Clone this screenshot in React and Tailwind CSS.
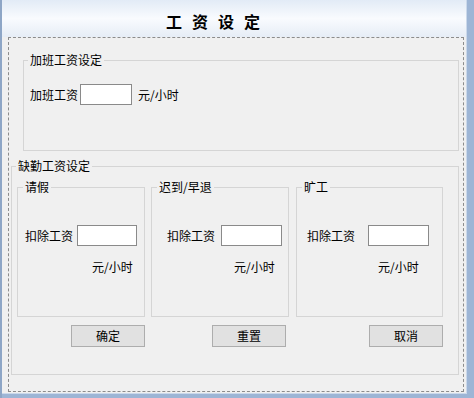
const subGroups = [
  { title: "请假", width: "w-[128px]", gap: "", labelPad: "pl-[7px]", inputGap: "ml-[4px] w-[60px]", unitPad: "pl-[74px]" },
  { title: "迟到/早退", width: "w-[138px]", gap: "ml-[6px]", labelPad: "pl-[15px]", inputGap: "ml-[6px] w-[61px]", unitPad: "pl-[82px]" },
  { title: "旷工", width: "w-[147px]", gap: "ml-[7px]", labelPad: "pl-[10px]", inputGap: "ml-[13px] w-[61px]", unitPad: "pl-[81px]" },
];

const TextBox = ({ className }) => (
  <input
    type="text"
    className={`h-[21px] bg-white border border-[#8a8a8a] outline-none px-1 text-[12px] ${className}`}
  />
);

const Button = ({ children, className }) => (
  <button className={`w-[74px] h-[22px] bg-[#e1e1e1] border border-[#adadad] text-[12px] leading-[20px] text-black ${className}`}>
    {children}
  </button>
);

export default function App() {
  return (
    <div className="w-[474px] h-[398px] bg-[#9db5d5] border-l-2 border-[#8ea6c6] pr-[7px] pb-[4px] font-['Noto_Sans_CJK_SC',sans-serif] text-[12px] text-black">
      <div className="w-full h-full bg-[#f0f0f0] border-r border-b border-[#cbd9eb] flex flex-col">
        {/* Title bar */}
        <div className="h-[37px] shrink-0 bg-linear-to-b from-[#e2ebf6] via-[#f9fbfe] to-[#e6edf6] pl-[164px] pt-[11px]">
          <span className="text-[16px] font-bold leading-[20px] tracking-[10px]">工资设定</span>
        </div>

        {/* Dashed panel */}
        <div className="ml-[6px] mr-[2px] h-[355px] border border-dashed border-[#8c8c8c] flex flex-col">
          <fieldset className="mt-[14px] ml-[14px] mr-[4px] min-w-0 border border-[#d5d5d5]">
            <legend className="ml-[4px] px-[2px] leading-4">加班工资设定</legend>
            <div className="flex items-center mt-[16px] mb-[45px] pl-[6px] h-[21px]">
              <span>加班工资</span>
              <TextBox className="ml-[2px] w-[52px]" />
              <span className="ml-[6px]">元/小时</span>
            </div>
          </fieldset>

          <fieldset className="mt-[7px] ml-[2px] mr-[4px] min-w-0 border border-[#d5d5d5]">
            <legend className="ml-[4px] px-[2px] leading-4">缺勤工资设定</legend>
            <div className="flex mt-[5px] pl-[5px]">
              {subGroups.map((g) => (
                <fieldset
                  key={g.title}
                  className={`${g.width} ${g.gap} h-[138px] shrink-0 min-w-0 border border-[#d5d5d5]`}
                >
                  <legend className="ml-[5px] px-[2px] leading-4">{g.title}</legend>
                  <div className={`flex items-center mt-[30px] h-[21px] ${g.labelPad}`}>
                    <span>扣除工资</span>
                    <TextBox className={g.inputGap} />
                  </div>
                  <div className={`mt-[13px] leading-4 ${g.unitPad}`}>元/小时</div>
                </fieldset>
              ))}
            </div>
            <div className="flex mt-[8px] mb-[27px]">
              <Button className="ml-[59px]">确定</Button>
              <Button className="ml-[67px]">重置</Button>
              <Button className="ml-[83px]">取消</Button>
            </div>
          </fieldset>
        </div>
      </div>
    </div>
  );
}
